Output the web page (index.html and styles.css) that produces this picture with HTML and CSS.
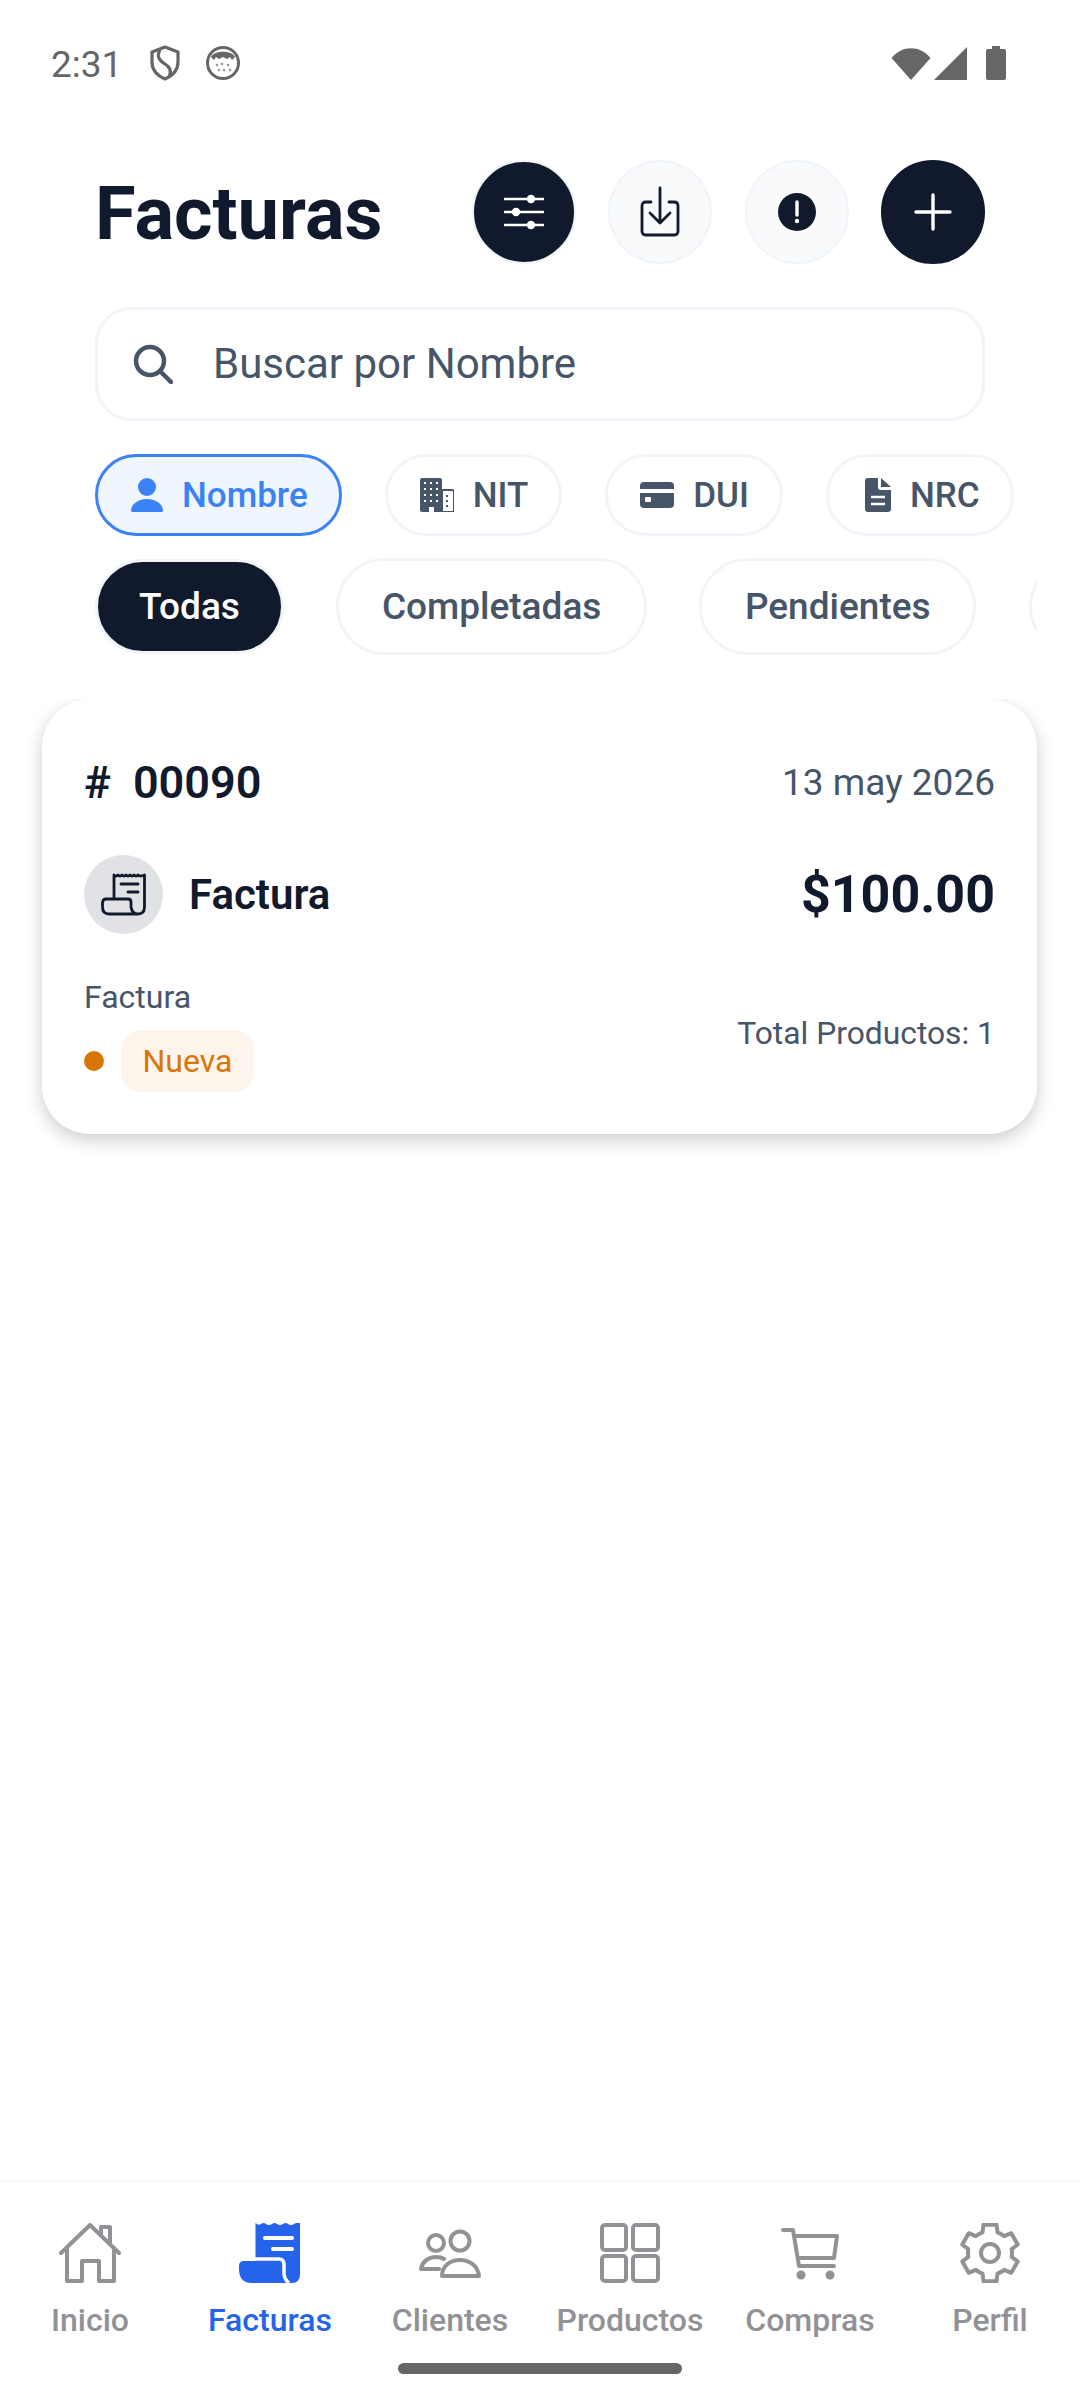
FILE: index.html
```html
<!DOCTYPE html>
<html lang="es">
   <head>
      <meta charset="UTF-8">
      <meta name="viewport" content="width=device-width, initial-scale=1.0">
      <title>Facturas</title>
      <link rel="stylesheet" href="styles.css">
   </head>

   <body>
      <div class="app">

         <!---------------STATUS BAR-------------->
         <div class="status-bar">
            <span class="status-time">2:31</span>
            <svg class="status-shield" viewBox="0 0 30 36"><path d="M15 2 L28 7 V17 C28 26 22 31 15 34 C8 31 2 26 2 17 V7 Z" fill="none" stroke="#666" stroke-width="3.2" stroke-linejoin="round"/><path d="M10 5 C6 12 10 16 15 19 C20 22 22 26 19 32" fill="none" stroke="#666" stroke-width="3.2"/></svg>
            <svg class="status-face" viewBox="0 0 34 34"><circle cx="17" cy="17" r="15.5" fill="#fff" stroke="#666" stroke-width="3"/><path d="M5 11 C8 4 26 4 29 11 L26 14 L24 11 L21 13 L17 11 L13 13 L10 11 L8 14 Z" fill="#666"/><g fill="#999"><circle cx="11" cy="19" r="1.3"/><circle cx="16" cy="18" r="1.3"/><circle cx="22" cy="19" r="1.3"/><circle cx="13" cy="24" r="1.3"/><circle cx="18" cy="24" r="1.3"/><circle cx="24" cy="24" r="1.3"/></g></svg>
            <span class="status-spacer"></span>
            <svg class="status-wifi" viewBox="0 0 40 33"><path d="M0.5 11 C11 -2 29 -2 39.500 11 L20 33 Z" fill="#666"/></svg>
            <svg class="status-signal" viewBox="0 0 33 33"><path d="M33 0 V33 H0 Z" fill="#666"/></svg>
            <svg class="status-battery" viewBox="0 0 20 34"><path d="M6 0 H14 V3 H18 Q20 3 20 5 V32 Q20 34 18 34 H2 Q0 34 0 32 V5 Q0 3 2 3 H6 Z" fill="#666"/></svg>
         </div>

         <!------------------HEADER---------------->
         <div class="header">
            <h1 class="title">Facturas</h1>
            <div class="header-actions">
               <button type="button" class="round-btn round-btn-filter">
                  <svg width="40" height="40" viewBox="0 0 40 40" fill="none" stroke="#fff" stroke-width="2.6" stroke-linecap="round"><path d="M1 7 H39 M1 20 H39 M1 33 H39"/><g fill="#fff" stroke="none"><circle cx="27" cy="7" r="4.200"/><circle cx="12" cy="20" r="4.200"/><circle cx="27" cy="33" r="4.200"/></g></svg>
               </button>
               <button type="button" class="round-btn">
                  <svg width="40" height="52" viewBox="0 0 40 52" fill="none" stroke="#111a2d" stroke-width="2.800" stroke-linecap="round" stroke-linejoin="round"><path d="M11 16 H6 Q2 16 2 20 V45 Q2 49 6 49 H34 Q38 49 38 45 V20 Q38 16 34 16 H29"/><path d="M20 2 V37 M10 27 L20 37 L30 27"/></svg>
               </button>
               <button type="button" class="round-btn">
                  <svg width="38" height="38" viewBox="0 0 38 38"><circle cx="19" cy="19" r="19" fill="#111a2d"/><path d="M19 9 V22" stroke="#fff" stroke-width="3.400" stroke-linecap="round"/><circle cx="19" cy="28" r="2.200" fill="#fff"/></svg>
               </button>
               <button type="button" class="round-btn round-btn-dark">
                  <svg width="38" height="38" viewBox="0 0 38 38" stroke="#fff" stroke-width="3.400" stroke-linecap="round"><path d="M19 2 V36 M2 19 H36"/></svg>
               </button>
            </div>
         </div>

         <!------------------SEARCH---------------->
         <div class="search">
            <svg class="search-icon" width="40" height="40" viewBox="0 0 40 40" fill="none" stroke="#475569" stroke-width="4.500" stroke-linecap="round"><circle cx="17" cy="17" r="14"/><path d="M27 27 L38 38"/></svg>
            <span class="search-text">Buscar por Nombre</span>
         </div>

         <!---------------SEARCH FIELD------------->
         <div class="chips">
            <div class="chip chip-active">
               <svg class="icon-person" width="32" height="34" viewBox="0 0 32 34" fill="#3b82f6"><circle cx="16" cy="9" r="9"/><path d="M1 34 Q0 34 0 32 C1 25 8 21 16 21 C24 21 31 25 32 32 Q32 34 31 34 Z"/></svg>
               <span>Nombre</span>
            </div>
            <div class="chip">
               <svg width="34" height="34" viewBox="0 0 34 34"><path d="M2 0 H20 Q22 0 22 2 V34 H14 V29 H9 V34 H2 Q0 34 0 32 V2 Q0 0 2 0 Z" fill="#475569"/><path d="M22 12 H32 Q34 12 34 14 V32 Q34 34 32 34 H22 Z" fill="none" stroke="#475569" stroke-width="2"/><g fill="#fff"><rect x="4" y="4" width="2" height="2"/><rect x="10" y="4" width="2" height="2"/><rect x="16" y="4" width="2" height="2"/><rect x="4" y="10" width="2" height="2"/><rect x="10" y="10" width="2" height="2"/><rect x="16" y="10" width="2" height="2"/><rect x="4" y="16" width="2" height="2"/><rect x="10" y="16" width="2" height="2"/><rect x="16" y="16" width="2" height="2"/><rect x="4" y="22" width="2" height="2"/><rect x="10" y="22" width="2" height="2"/><rect x="16" y="22" width="2" height="2"/></g><g fill="#475569"><rect x="26" y="17" width="2" height="2"/><rect x="26" y="22" width="2" height="2"/><rect x="26" y="27" width="2" height="2"/></g></svg>
               <span>NIT</span>
            </div>
            <div class="chip">
               <svg width="34" height="26" viewBox="0 0 34 26"><path d="M4 0 H30 Q34 0 34 4 V7 H0 V4 Q0 0 4 0 Z M0 11 H34 V22 Q34 26 30 26 H4 Q0 26 0 22 Z" fill="#475569"/><rect x="5" y="15" width="6" height="5" rx="1" fill="#fff"/></svg>
               <span>DUI</span>
            </div>
            <div class="chip">
               <svg class="icon-doc" width="26" height="34" viewBox="0 0 26 34"><path d="M3 0 H13 V9 Q13 12 16 12 H26 V31 Q26 34 23 34 H3 Q0 34 0 31 V3 Q0 0 3 0 Z M16 0 L26 9 H16 Z" fill="#475569"/><path d="M6 19 H20 M6 26 H20" stroke="#fff" stroke-width="2.600"/></svg>
               <span>NRC</span>
            </div>
         </div>

         <!------------------TABS------------------>
         <div class="tabs">
            <div class="tab tab-active">Todas</div>
            <div class="tab">Completadas</div>
            <div class="tab">Pendientes</div>
            <div class="tab tab-more"></div>
         </div>

         <!------------------CARD------------------>
         <div class="card-clip">
            <div class="card">
               <div class="card-row card-top">
                  <span class="card-number"><span class="card-hash">#</span>00090</span>
                  <span class="card-date">13 may 2026</span>
               </div>
               <div class="card-row card-middle">
                  <div class="card-who">
                     <div class="card-icon">
                        <svg width="45" height="43" viewBox="0 0 45 43" fill="none" stroke="#111a2d" stroke-width="2.800" stroke-linecap="round" stroke-linejoin="round"><path d="M13 26 V2 Q15 4 17 2 Q19 4 21 2 Q23 4 25 2 Q27 4 29 2 Q31 4 33 2 Q35 4 37 2 Q39 4 43.500 2 V34 Q43.500 41 37 41 Q31 41 30 34 V29 Q30 26 27 26 H5 Q1.500 26 1.500 30 V34 Q1.500 41 8 41 H37"/><path d="M20 11 H37 M27 19 H37"/></svg>
                     </div>
                     <span class="card-name">Factura</span>
                  </div>
                  <span class="card-amount">$100.00</span>
               </div>
               <div class="card-row card-bottom">
                  <div>
                     <div class="card-type">Factura</div>
                     <div class="card-state">
                        <span class="state-dot"></span>
                        <span class="state-badge">Nueva</span>
                     </div>
                  </div>
                  <span class="card-total">Total Productos: 1</span>
               </div>
            </div>
         </div>

         <!---------------BOTTOM NAV--------------->
         <div class="bottom-nav">
            <div class="nav-items">
               <div class="nav-item">
                  <svg width="62" height="60" viewBox="0 0 62 60" fill="none" stroke="#929296" stroke-width="4" stroke-linecap="round" stroke-linejoin="round"><path d="M2 30 L31 2 L60 30"/><path d="M8 25 V58 H23 V38 H40 V58 H55 V25"/><path d="M42 11 V4 H51 V20"/></svg>
                  <span>Inicio</span>
               </div>
               <div class="nav-item nav-item-active">
                  <svg width="62" height="60" viewBox="0 0 62 60"><path d="M16.500 0 Q19.500 3 22 1 Q25 -1 27 1 Q30 3 33 1 Q36 -1 38 1 Q41 3 44 1 Q47 -1 49 1 Q52 3 55 1 Q58 -1 61 0 V51 Q61 60 52.500 60 H16.500 Z" fill="#2563eb"/><path d="M14 36 H40 Q45 36 45 42 V50 Q45 56 50 60" fill="none" stroke="#fff" stroke-width="3.500"/><path d="M5 38 H37 Q41 38 41 42 V50 Q41 56 45 60 H13 Q0 60 0 46 V43 Q0 38 5 38 Z" fill="#2563eb"/><path d="M26 15 H53 M34 26 H53" stroke="#fff" stroke-width="4" stroke-linecap="round"/></svg>
                  <span>Facturas</span>
               </div>
               <div class="nav-item">
                  <svg width="62" height="60" viewBox="0 0 62 60" fill="none" stroke="#929296" stroke-width="4" stroke-linecap="round" stroke-linejoin="round"><circle cx="17" cy="20" r="8"/><circle cx="41" cy="18" r="9.500"/><path d="M25 36 Q22 34 17 34 C9 34 3 39 2 46 H20"/><path d="M23 53 C23 43 31 37 41 37 C51 37 59 43 60 53 Z"/></svg>
                  <span>Clientes</span>
               </div>
               <div class="nav-item">
                  <svg width="60" height="60" viewBox="0 0 60 60" fill="none" stroke="#929296" stroke-width="4" stroke-linejoin="round"><rect x="2" y="2" width="24" height="25" rx="3"/><rect x="33" y="2" width="25" height="25" rx="3"/><rect x="2" y="33" width="24" height="25" rx="3"/><rect x="33" y="33" width="25" height="25" rx="3"/></svg>
                  <span>Productos</span>
               </div>
               <div class="nav-item">
                  <svg width="60" height="60" viewBox="0 0 60 60" fill="none" stroke="#929296" stroke-width="4" stroke-linecap="round" stroke-linejoin="round"><path d="M3 7 H13 L19 43 H54"/><path d="M15 13 H57 L54 35 H18"/><g fill="#929296" stroke="none"><circle cx="21" cy="52" r="4.500"/><circle cx="50" cy="52" r="4.500"/></g></svg>
                  <span>Compras</span>
               </div>
               <div class="nav-item">
                  <svg width="60" height="60" viewBox="0 0 60 60" fill="none" stroke="#929296" stroke-width="4" stroke-linecap="round" stroke-linejoin="round"><path d="M22.500 9.300 L23.500 1.700 H36.500 L37.500 9.300 A23 23 0 0 1 44.180 13.150 L51.260 10.220 L57.760 21.480 L51.680 26.150 A23 23 0 0 1 51.680 33.850 L57.760 38.520 L51.260 49.780 L44.180 46.850 A23 23 0 0 1 37.500 50.700 L36.500 58.300 H23.500 L22.500 50.700 A23 23 0 0 1 15.820 46.850 L8.740 49.780 L2.240 38.520 L8.320 33.850 A23 23 0 0 1 8.320 26.150 L2.240 21.480 L8.740 10.220 L15.820 13.150 A23 23 0 0 1 22.500 9.300 Z"/><circle cx="30" cy="30" r="9"/></svg>
                  <span>Perfil</span>
               </div>
            </div>
            <div class="home-indicator"></div>
         </div>

      </div>
   </body>
</html>
```

FILE: styles.css
```css
*{
   box-sizing: border-box;
   margin: 0;
   padding: 0;
}

body{
   background: #fff;
   font-family: "Roboto", "Liberation Sans", sans-serif;
   color: #111a2d;
}

.app{
   width: 1080px;
   height: 2400px;
   display: flex;
   flex-direction: column;
   overflow: hidden;
}

/* status bar */
.status-bar{
   height: 126px;
   display: flex;
   align-items: center;
   padding: 0 74px 0 51px;
}

.status-time{
   width: 99px;
   padding-top: 3px;
   font-size: 37px;
   color: #666;
}

.status-shield{
   width: 30px;
   height: 36px;
}

.status-face{
   width: 34px;
   height: 34px;
   margin-left: 26px;
}

.status-spacer{
   flex: 1;
}

.status-wifi{
   width: 40px;
   height: 33px;
}

.status-signal{
   width: 33px;
   height: 33px;
   margin-left: 3px;
}

.status-battery{
   width: 20px;
   height: 34px;
   margin-left: 19px;
}

/* header */
.header{
   height: 104px;
   margin-top: 34px;
   padding: 0 95px;
   display: flex;
   align-items: center;
   justify-content: space-between;
}

.title{
   padding-top: 2px;
   font-size: 74px;
   font-weight: 700;
   color: #111a2d;
}

.header-actions{
   display: flex;
   gap: 32.5px;
}

.round-btn{
   width: 104px;
   height: 104px;
   border-radius: 50%;
   border: 2px solid #f1f5f9;
   background: #f8fafc;
   display: flex;
   align-items: center;
   justify-content: center;
}

.round-btn-filter{
   background: #111a2d;
}

.round-btn-dark{
   background: #111a2d;
   border-color: #111a2d;
}

/* search */
.search{
   height: 114px;
   margin: 43px 95px 0;
   border: 3px solid #f1f5f9;
   border-radius: 36px;
   display: flex;
   align-items: center;
   padding-left: 35px;
}

.search-icon{
   flex-shrink: 0;
}

.search-text{
   margin-left: 40px;
   padding-bottom: 2px;
   font-size: 42px;
   color: #475569;
}

/* chips */
.chips{
   margin-top: 33px;
   padding-left: 95px;
   display: flex;
   gap: 43px;
}

.chip{
   height: 82px;
   padding: 0 31px 0 32px;
   border: 3px solid #f1f5f9;
   border-radius: 41px;
   display: flex;
   align-items: center;
   gap: 19px;
   font-size: 35px;
   font-weight: 500;
   color: #475569;
}

.chip-active{
   background: #eff6ff;
   border-color: #3b82f6;
   color: #3b82f6;
}

.icon-person{
   margin-left: 1px;
}

.icon-doc{
   margin-left: 4px;
}

/* tabs */
.tabs{
   height: 97px;
   margin: 22px 43px 0 95px;
   display: flex;
   align-items: center;
   gap: 52.5px;
   overflow: hidden;
}

.tab{
   flex-shrink: 0;
   height: 97px;
   padding: 0 42.5px;
   border: 3px solid #f1f5f9;
   border-radius: 49px;
   display: flex;
   align-items: center;
   font-size: 37px;
   font-weight: 500;
   color: #475569;
}

.tab-active{
   height: 95px;
   padding: 0 41px;
   background: #111a2d;
   color: #fff;
}

.tab-more{
   width: 200px;
}

/* card */
.card-clip{
   margin-top: 44px;
   padding: 0 43px 40px 42px;
   overflow: hidden;
}

.card{
   height: 435px;
   padding: 50px 42px 0;
   background: #fff;
   border-radius: 48px;
   box-shadow: 0 6px 18px rgba(0, 0, 0, 0.2);
}

.card-row{
   display: flex;
   align-items: center;
   justify-content: space-between;
}

.card-top{
   height: 66px;
}

.card-number{
   font-size: 45px;
   font-weight: 600;
}

.card-hash{
   margin-right: 22px;
}

.card-date{
   font-size: 37px;
   color: #475569;
}

.card-middle{
   margin-top: 40px;
}

.card-who{
   display: flex;
   align-items: center;
   gap: 26px;
}

.card-icon{
   width: 79px;
   height: 79px;
   border-radius: 50%;
   background: #e0e2e5;
   display: flex;
   align-items: center;
   justify-content: center;
}

.card-name{
   font-size: 42px;
   font-weight: 600;
}

.card-amount{
   font-size: 52px;
   font-weight: 700;
}

.card-bottom{
   margin-top: 41px;
   align-items: flex-start;
}

.card-type{
   font-size: 32px;
   line-height: 44px;
   color: #475569;
}

.card-state{
   margin-top: 11px;
   display: flex;
   align-items: center;
   gap: 17px;
}

.state-dot{
   width: 20px;
   height: 20px;
   border-radius: 50%;
   background: #d97706;
}

.state-badge{
   padding: 0 21.5px;
   height: 62px;
   line-height: 62px;
   border-radius: 20px;
   background: #fdf4ec;
   color: #d97706;
   font-size: 32px;
   font-weight: 450;
}

.card-total{
   margin-top: 39px;
   font-size: 31.8px;
   color: #475569;
}

/* bottom nav */
.bottom-nav{
   margin-top: auto;
   border-top: 3px solid #f8f8f8;
}

.nav-items{
   padding-top: 40px;
   display: grid;
   grid-template-columns: repeat(6, 180px);
}

.nav-item{
   display: flex;
   flex-direction: column;
   align-items: center;
   font-size: 32px;
   font-weight: 500;
   color: #929296;
}

.nav-item span{
   margin-top: 17px;
   line-height: 40px;
}

.nav-item-active{
   color: #2563eb;
}

.home-indicator{
   width: 284px;
   height: 11px;
   margin: 23px auto 26px;
   border-radius: 6px;
   background: #666;
}
```
